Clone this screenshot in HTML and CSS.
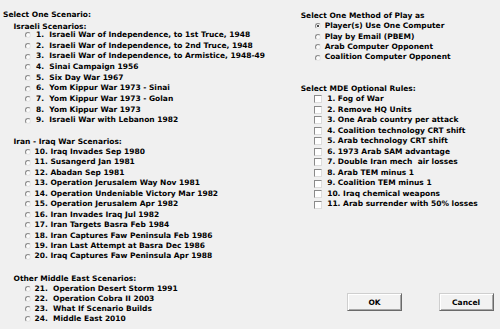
FILE: index.html
```html
<!DOCTYPE html>
<html>
<head>
<meta charset="utf-8">
<link rel="stylesheet" href="styles.css">
</head>
<body>
<div class="dialog">
  <div class="col left">
    <div class="hd h-main">Select One Scenario:</div>
    <div class="hd h-sub h-isr">Israeli Scenarios:</div>
    <ul class="opts g1">
      <li class="opt"><span class="radio"></span><span class="lbl">1.  Israeli War of Independence, to 1st Truce, 1948</span></li>
      <li class="opt"><span class="radio"></span><span class="lbl">2.  Israeli War of Independence, to 2nd Truce, 1948</span></li>
      <li class="opt"><span class="radio"></span><span class="lbl">3.  Israeli War of Independence, to Armistice, 1948-49</span></li>
      <li class="opt"><span class="radio"></span><span class="lbl">4.  Sinai Campaign 1956</span></li>
      <li class="opt"><span class="radio"></span><span class="lbl">5.  Six Day War 1967</span></li>
      <li class="opt"><span class="radio"></span><span class="lbl">6.  Yom Kippur War 1973 - Sinai</span></li>
      <li class="opt"><span class="radio"></span><span class="lbl">7.  Yom Kippur War 1973 - Golan</span></li>
      <li class="opt"><span class="radio"></span><span class="lbl">8.  Yom Kippur War 1973</span></li>
      <li class="opt"><span class="radio"></span><span class="lbl">9.  Israeli War with Lebanon 1982</span></li>
    </ul>
    <div class="hd h-sub h-iran">Iran - Iraq War Scenarios:</div>
    <ul class="opts g2">
      <li class="opt"><span class="radio"></span><span class="lbl">10. Iraq Invades Sep 1980</span></li>
      <li class="opt"><span class="radio"></span><span class="lbl">11. Susangerd Jan 1981</span></li>
      <li class="opt"><span class="radio"></span><span class="lbl">12. Abadan Sep 1981</span></li>
      <li class="opt"><span class="radio"></span><span class="lbl">13. Operation Jerusalem Way Nov 1981</span></li>
      <li class="opt"><span class="radio"></span><span class="lbl">14. Operation Undeniable Victory Mar 1982</span></li>
      <li class="opt"><span class="radio"></span><span class="lbl">15. Operation Jerusalem Apr 1982</span></li>
      <li class="opt"><span class="radio"></span><span class="lbl">16. Iran Invades Iraq Jul 1982</span></li>
      <li class="opt"><span class="radio"></span><span class="lbl">17. Iran Targets Basra Feb 1984</span></li>
      <li class="opt"><span class="radio"></span><span class="lbl">18. Iran Captures Faw Peninsula Feb 1986</span></li>
      <li class="opt"><span class="radio"></span><span class="lbl">19. Iran Last Attempt at Basra Dec 1986</span></li>
      <li class="opt"><span class="radio"></span><span class="lbl">20. Iraq Captures Faw Peninsula Apr 1988</span></li>
    </ul>
    <div class="hd h-sub h-other">Other Middle East Scenarios:</div>
    <ul class="opts g3">
      <li class="opt"><span class="radio"></span><span class="lbl">21.  Operation Desert Storm 1991</span></li>
      <li class="opt"><span class="radio"></span><span class="lbl">22.  Operation Cobra II 2003</span></li>
      <li class="opt"><span class="radio"></span><span class="lbl">23.  What If Scenario Builds</span></li>
      <li class="opt"><span class="radio"></span><span class="lbl">24.  Middle East 2010</span></li>
    </ul>
  </div>
  <div class="col right">
    <div class="hd h-method">Select One Method of Play as</div>
    <ul class="opts g4">
      <li class="opt"><span class="radio checked"></span><span class="lbl">Player(s) Use One Computer</span></li>
      <li class="opt"><span class="radio"></span><span class="lbl">Play by Email (PBEM)</span></li>
      <li class="opt"><span class="radio"></span><span class="lbl">Arab Computer Opponent</span></li>
      <li class="opt"><span class="radio"></span><span class="lbl">Coalition Computer Opponent</span></li>
    </ul>
    <div class="hd h-rules">Select MDE Optional Rules:</div>
    <ul class="opts g5">
      <li class="opt"><span class="check"></span><span class="lbl">1. Fog of War</span></li>
      <li class="opt"><span class="check"></span><span class="lbl">2. Remove HQ Units</span></li>
      <li class="opt"><span class="check"></span><span class="lbl">3. One Arab country per attack</span></li>
      <li class="opt"><span class="check"></span><span class="lbl">4. Coalition technology CRT shift</span></li>
      <li class="opt"><span class="check"></span><span class="lbl">5. Arab technology CRT shift</span></li>
      <li class="opt"><span class="check"></span><span class="lbl">6. 1973 Arab SAM advantage</span></li>
      <li class="opt"><span class="check"></span><span class="lbl">7. Double Iran mech  air losses</span></li>
      <li class="opt"><span class="check"></span><span class="lbl">8. Arab TEM minus 1</span></li>
      <li class="opt"><span class="check"></span><span class="lbl">9. Coalition TEM minus 1</span></li>
      <li class="opt"><span class="check"></span><span class="lbl">10. Iraq chemical weapons</span></li>
      <li class="opt"><span class="check"></span><span class="lbl">11. Arab surrender with 50% losses</span></li>
    </ul>
    <div class="buttons">
      <button class="btn">OK</button>
      <button class="btn">Cancel</button>
    </div>
  </div>
</div>
</body>
</html>
```

FILE: styles.css
```css
html, body {
  margin: 0;
  padding: 0;
  background: #f0f0f0;
}
body {
  width: 500px;
  height: 329px;
  overflow: hidden;
  font-family: "DejaVu Sans", "Verdana", sans-serif;
  font-weight: bold;
  font-size: 7.5px;
  color: #000;
}
.dialog {
  display: flex;
  width: 500px;
  height: 329px;
}
.col {
  display: flex;
  flex-direction: column;
  box-sizing: border-box;
}
.left {
  width: 300.7px;
  padding-left: 3px;
  padding-top: 12.3px;
}
.right {
  flex: 1;
  padding-top: 12.7px;
}
.hd {
  height: 6px;
  line-height: 6px;
  white-space: pre;
}
.h-sub {
  padding-left: 10.5px;
}
.h-isr { margin-top: 5.7px; }
.h-iran { margin-top: 13.3px; }
.h-other { margin-top: 14.1px; }
.h-rules { margin-top: 23.35px; }

.opts {
  list-style: none;
  margin: 0;
  padding: 0 0 0 22px;
  display: flex;
  flex-direction: column;
}
.opt {
  display: flex;
  align-items: center;
  white-space: pre;
}
.g1 { margin-top: 0.2px; }
.g1 .opt { height: 10.65px; line-height: 10.65px; }
.g1 .lbl { padding-left: 1.5px; }
.g2 { margin-top: 1.8px; }
.g2 .opt { height: 10.44px; line-height: 10.44px; }
.g3 { margin-top: 2.3px; }
.g3 .opt { height: 10px; line-height: 10px; }

.g4 { margin-top: 2.4px; padding-left: 14.5px; }
.g4 .opt { height: 10.47px; line-height: 10.47px; }
.g5 { margin-top: 1.7px; padding-left: 13.5px; }
.g5 .opt { height: 10.54px; line-height: 10.54px; }

.radio {
  flex: none;
  width: 4px;
  height: 4px;
  border-radius: 50%;
  border: 1px solid;
  border-color: #8a8a8a #e6e6e6 #e6e6e6 #8a8a8a;
  background: #fbfbfb;
  margin-right: 3.5px;
  position: relative;
}
.radio.checked::after {
  content: "";
  position: absolute;
  left: 1px;
  top: 1px;
  width: 2px;
  height: 2px;
  border-radius: 50%;
  background: #111;
}
.check {
  flex: none;
  width: 6px;
  height: 6px;
  border: 1px solid;
  border-color: #8a8a8a #dcdcdc #dcdcdc #8a8a8a;
  background: #fff;
  margin-right: 5px;
}

.buttons {
  display: flex;
  gap: 36.6px;
  margin-top: 83.3px;
  padding-left: 46.3px;
}
.btn {
  width: 55px;
  height: 18px;
  box-sizing: border-box;
  margin: 0;
  padding: 0;
  font-family: "DejaVu Sans", "Verdana", sans-serif;
  font-weight: bold;
  font-size: 7.5px;
  color: #000;
  background: #f2f2f2;
  border: 1px solid;
  border-color: #cfcfcf #6a6a6a #6a6a6a #cfcfcf;
  box-shadow: inset 1px 1px #ffffff, inset -1px -1px #a8a8a8;
}
```
